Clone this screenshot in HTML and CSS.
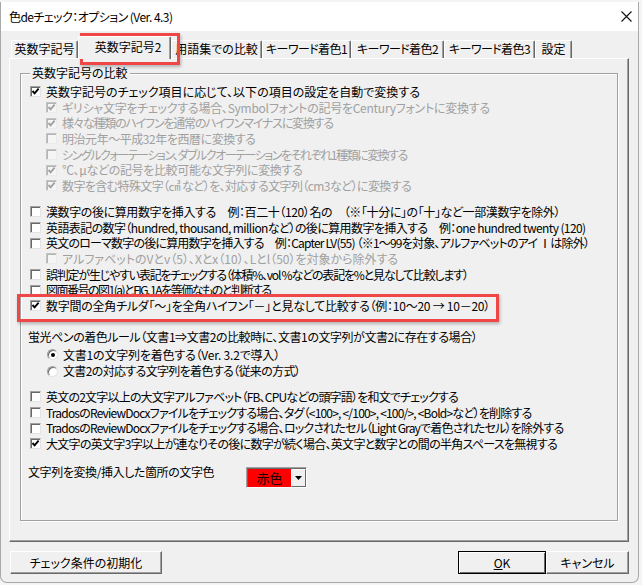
FILE: index.html
```html
<!DOCTYPE html>
<html lang="ja">
<head>
<meta charset="utf-8">
<title>色deチェック：オプション</title>
<link rel="stylesheet" href="styles.css">
</head>
<body>
<div class="window">
  <div class="titlebar">
    <span class="title">色deチェック：オプション (Ver. 4.3)</span>
    <svg class="close" width="11" height="11" viewBox="0 0 11 11"><path d="M0.5 0.5 L10.5 10.5 M10.5 0.5 L0.5 10.5" stroke="#111" stroke-width="1.1" fill="none"/></svg>
  </div>
  <div class="client">
    <div class="tabs">
      <div class="tab w1">英数字記号</div>
      <div class="tab active w2">英数字記号2</div>
      <div class="tab w3">用語集での比較</div>
      <div class="tab w4 kt">キーワード着色1</div>
      <div class="tab w5 kt">キーワード着色2</div>
      <div class="tab w6 kt">キーワード着色3</div>
      <div class="tab w7">設定</div>
    </div>
    <div class="panel">
      <div class="group">
        <div class="legend">英数字記号の比較</div>
        <div class="rows first">
          <div class="row l1"><span class="cb on"><svg viewBox="0 0 9 9"><polyline points="1.5,4 3.6,6.3 7.6,1.6"/></svg></span><span>英数字記号のチェック項目に応じて、以下の項目の設定を自動で変換する</span></div>
          <div class="row l2 dis"><span class="cb on"><svg viewBox="0 0 9 9"><polyline points="1.5,4 3.6,6.3 7.6,1.6"/></svg></span><span class="ls25">ギリシャ文字をチェックする場合、Symbolフォントの記号をCenturyフォントに変換する</span></div>
          <div class="row l2 dis"><span class="cb on"><svg viewBox="0 0 9 9"><polyline points="1.5,4 3.6,6.3 7.6,1.6"/></svg></span><span class="ls120">様々な種類のハイフンを通常のハイフンマイナスに変換する</span></div>
          <div class="row l2 dis"><span class="cb"></span><span class="ls45">明治元年～平成32年を西暦に変換する</span></div>
          <div class="row l2 dis"><span class="cb"></span><span class="ls145">シングルクォーテーション、ダブルクオーテーションをそれぞれ1種類に変換する</span></div>
          <div class="row l2 dis"><span class="cb on"><svg viewBox="0 0 9 9"><polyline points="1.5,4 3.6,6.3 7.6,1.6"/></svg></span><span class="ls35">℃、μなどの記号を比較可能な文字列に変換する</span></div>
          <div class="row l2 dis"><span class="cb on"><svg viewBox="0 0 9 9"><polyline points="1.5,4 3.6,6.3 7.6,1.6"/></svg></span><span class="ls60">数字を含む特殊文字（㎤ など）を、対応する文字列（cm3など）に変換する</span></div>
        </div>
        <div class="rows second">
          <div class="row l1"><span class="cb"></span><span class="ls40">漢数字の後に算用数字を挿入する　例：百二十（120）名の　（※「十分に」の「十」など一部漢数字を除外）</span></div>
          <div class="row l1"><span class="cb"></span><span class="ls60">英語表記の数字（hundred, thousand, millionなど）の後に算用数字を挿入する　例：one hundred twenty (120)</span></div>
          <div class="row l1"><span class="cb"></span><span class="ls80">英文のローマ数字の後に算用数字を挿入する　例：Capter LV(55) （※1～99を対象、アルファベットのアイ Ⅰは除外）</span></div>
          <div class="row l2 dis"><span class="cb"></span><span>アルファベットのVとv（5）、Xとx（10）、Lとl（50）を対象から除外する</span></div>
          <div class="row l1"><span class="cb"></span><span class="ls120">誤判定が生じやすい表記をチェックする（体積%、vol %などの表記を%と見なして比較します）</span></div>
          <div class="row l1"><span class="cb"></span><span class="ls150">図面番号の図1(a)とFIG. 1Aを等価なものと判断する</span></div>
          <div class="row l1"><span class="cb on"><svg viewBox="0 0 9 9"><polyline points="1.5,4 3.6,6.3 7.6,1.6"/></svg></span><span class="ls25">数字間の全角チルダ「～」を全角ハイフン「－」と見なして比較する（例：10～20 → 10－20）</span></div>
        </div>
        <div class="label third"><span class="ls45">蛍光ペンの着色ルール（文書1⇒文書2の比較時に、文書1の文字列が文書2に存在する場合）</span></div>
        <div class="radios">
          <div class="row rl"><span class="rb on"></span><span class="ls20">文書1の文字列を着色する（Ver. 3.2で導入）</span></div>
          <div class="row rl"><span class="rb"></span><span class="ls65">文書2の対応する文字列を着色する（従来の方式）</span></div>
        </div>
        <div class="rows fourth">
          <div class="row l1"><span class="cb"></span><span class="ls80">英文の2文字以上の大文字アルファベット（FB、CPUなどの頭字語）を和文でチェックする</span></div>
          <div class="row l1"><span class="cb"></span><span class="ls80">TradosのReviewDocxファイルをチェックする場合、タグ（&lt;100&gt;, &lt;/100&gt;, &lt;100/&gt;, &lt;Bold&gt;など）を削除する</span></div>
          <div class="row l1"><span class="cb"></span><span class="ls80">TradosのReviewDocxファイルをチェックする場合、ロックされたセル（Light Grayで着色されたセル）を除外する</span></div>
          <div class="row l1"><span class="cb on"><svg viewBox="0 0 9 9"><polyline points="1.5,4 3.6,6.3 7.6,1.6"/></svg></span><span class="ls70">大文字の英文字3字以上が連なりその後に数字が続く場合、英文字と数字との間の半角スペースを無視する</span></div>
        </div>
        <div class="colorrow">
          <div class="clabel"><span class="ls40">文字列を変換/挿入した箇所の文字色</span></div>
          <div class="combo">
            <div class="cvalue">赤色</div>
            <div class="cbtn"><svg width="7" height="4" viewBox="0 0 7 4"><path d="M0 0 H7 L3.5 4 Z" fill="#000"/></svg></div>
          </div>
        </div>
      </div>
    </div>
    <div class="buttons">
      <div class="btn reset">チェック条件の初期化</div>
      <div class="btngroup">
        <div class="btn ok default"><span class="u">O</span>K</div>
        <div class="btn cancel">キャンセル</div>
      </div>
    </div>
  </div>
</div>
<div class="hl hl-tab"></div>
<div class="hl hl-row"></div>
</body>
</html>
```

FILE: styles.css
```css
* { box-sizing: border-box; }
html, body { margin: 0; padding: 0; }
body {
  width: 642px;
  height: 585px;
  overflow: hidden;
  background: #f4f4f4;
  padding-top: 2px;
  font-family: "Noto Sans CJK JP", "Noto Sans", sans-serif;
  font-size: 12px;
  font-feature-settings: "palt";
  color: #000;
  position: relative;
}
.window {
  width: 639px;
  height: 581px;
  background: #f0f0f0;
  border: 1px solid #a9a9a9;
  border-top: none;
  border-radius: 0 0 7px 7px;
  overflow: hidden;
}
.titlebar {
  height: 29px;
  background: #fff;
  display: flex;
  align-items: center;
  padding-left: 8px;
  padding-right: 6px;
}
.title { line-height: 16px; letter-spacing: -0.55px; }
.close { margin-left: auto; }

.client { padding: 0 9px 0 8px; }

.tabs {
  margin-top: 5px;
  height: 22px;
  display: flex;
  align-items: flex-end;
  padding-left: 2px;
}
.tab {
  height: 18px;
  line-height: 16px;
  text-align: center;
  white-space: nowrap;
  border-top: 1px solid #fff;
  border-left: 1px solid #fff;
  border-right: 1px solid #696969;
  box-shadow: inset -1px 0 0 #a0a0a0;
  border-radius: 2px 2px 0 0;
  background: #f0f0f0;
}
.tab.kt { letter-spacing: -0.6px; }
.tab.active {
  height: 23px;
  margin-bottom: -1px;
  position: relative;
  z-index: 1;
  padding-left: 7px;
  line-height: 19px;
}
.w1 { width: 67px; }
.w2 { width: 93px; }
.w3 { width: 91px; }
.w4 { width: 89px; }
.w5 { width: 93px; }
.w6 { width: 91px; }
.w7 { width: 37px; }

.panel {
  width: 620px;
  height: 484px;
  border-top: 1px solid #fff;
  border-left: 1px solid #fff;
  border-right: 1px solid #696969;
  border-bottom: 1px solid #696969;
  box-shadow: inset -1px -1px 0 #a0a0a0;
  padding-top: 14px;
}
.group {
  margin: 0 10px;
  height: 448px;
  border: 1px solid #a0a0a0;
  box-shadow: inset 1px 1px 0 #fff, 1px 1px 0 #fff;
}
.legend {
  width: fit-content;
  margin: -9px 0 0 9px;
  padding: 0 2px;
  background: #f0f0f0;
  line-height: 16px;
}
.rows.first { margin-top: 3px; }
.rows.second { margin-top: 10px; }
.label.third { margin-top: 15px; padding-left: 7px; line-height: 15.7px; height: 15.7px; white-space: nowrap; }
.radios { margin-top: 2px; }
.rows.fourth { margin-top: 9.5px; }

.row {
  display: flex;
  align-items: center;
  height: 15.7px;
  white-space: nowrap;
  line-height: 15.7px;
}
.radios .row { height: 16.5px; }
.row.l1 { padding-left: 9px; }
.row.l2 { padding-left: 25px; }
.row.rl { padding-left: 26px; }
.row.dis { color: #a0a0a0; }

/* tracking adjustments to match the narrow UI font widths */
.ls20 { letter-spacing: -0.2px; }
.ls25 { letter-spacing: -0.25px; }
.ls35 { letter-spacing: -0.35px; }
.ls40 { letter-spacing: -0.4px; }
.ls45 { letter-spacing: -0.45px; }
.ls60 { letter-spacing: -0.6px; }
.ls65 { letter-spacing: -0.65px; }
.ls70 { letter-spacing: -0.7px; }
.ls80 { letter-spacing: -0.8px; }
.ls120 { letter-spacing: -1.2px; }
.ls145 { letter-spacing: -1.45px; }
.ls150 { letter-spacing: -1.5px; }

.cb {
  flex: 0 0 11px;
  width: 11px;
  height: 11px;
  margin-right: 5px;
  background: #fff;
  border: 1px solid;
  border-color: #a0a0a0 #e3e3e3 #e3e3e3 #a0a0a0;
  box-shadow: inset 1px 1px 0 #696969;
}
.cb svg {
  display: block;
  width: 9px;
  height: 9px;
}
.cb svg polyline {
  fill: none;
  stroke: #000;
  stroke-width: 1.9;
}
.dis .cb {
  background: #f5f5f5;
  border-color: #c4c4c4 #ebebeb #ebebeb #c4c4c4;
  box-shadow: inset 1px 1px 0 #b4b4b4;
}
.dis .cb svg polyline { stroke: #a0a0a0; }

.rb {
  flex: 0 0 11px;
  width: 11px;
  height: 11px;
  margin-right: 5px;
  border-radius: 50%;
  background: #fff;
  border: 1px solid;
  border-color: #a0a0a0 #e3e3e3 #e3e3e3 #a0a0a0;
  box-shadow: inset 1px 1px 0 #696969;
  display: flex;
  align-items: center;
  justify-content: center;
}
.rb.on::after {
  content: "";
  width: 4px;
  height: 4px;
  border-radius: 50%;
  background: #000;
}

.colorrow {
  display: flex;
  align-items: flex-start;
  margin-top: 12px;
  padding-left: 7px;
}
.clabel {
  flex: 0 0 218px;
  line-height: 16px;
  white-space: nowrap;
}
.combo {
  margin-top: 3px;
  width: 61px;
  height: 21px;
  display: flex;
  border: 1px solid;
  border-color: #a0a0a0 #fff #fff #a0a0a0;
  box-shadow: inset 1px 1px 0 #696969;
  padding: 1px 0 0 1px;
}
.cvalue {
  flex: 0 0 43px;
  background: #ff0000;
  color: #1a0000;
  text-align: center;
  line-height: 18px;
  font-size: 13px;
}
.cbtn {
  flex: 1;
  background: #f0f0f0;
  border-top: 1px solid #fff;
  border-left: 1px solid #fff;
  border-right: 1px solid #696969;
  border-bottom: 1px solid #696969;
  display: flex;
  align-items: center;
  justify-content: center;
}

.buttons {
  margin-top: 9px;
  display: flex;
  justify-content: space-between;
  padding-left: 1px;
}
.btngroup { display: flex; }
.btn {
  height: 23px;
  line-height: 21px;
  text-align: center;
  background: #f0f0f0;
  border-top: 1px solid #fff;
  border-left: 1px solid #fff;
  border-right: 1px solid #696969;
  border-bottom: 1px solid #696969;
  box-shadow: inset -1px -1px 0 #a0a0a0;
}
.btn.reset { width: 152px; }
.btn.ok { width: 88px; }
.btn.default {
  border: 1px solid #000;
  box-shadow: inset 1px 1px 0 #fff, inset -1px -1px 0 #696969;
}
.btn.cancel { width: 83px; }
.u { text-decoration: underline; }

.hl {
  position: absolute;
  border: 3px solid #ef4646;
  box-shadow: 1px 2px 3px rgba(0, 0, 0, 0.25);
  pointer-events: none;
}
.hl-tab { left: 80px; top: 33px; width: 100px; height: 32px; }
.hl-row { left: 17px; top: 294px; width: 482px; height: 28px; }
```
